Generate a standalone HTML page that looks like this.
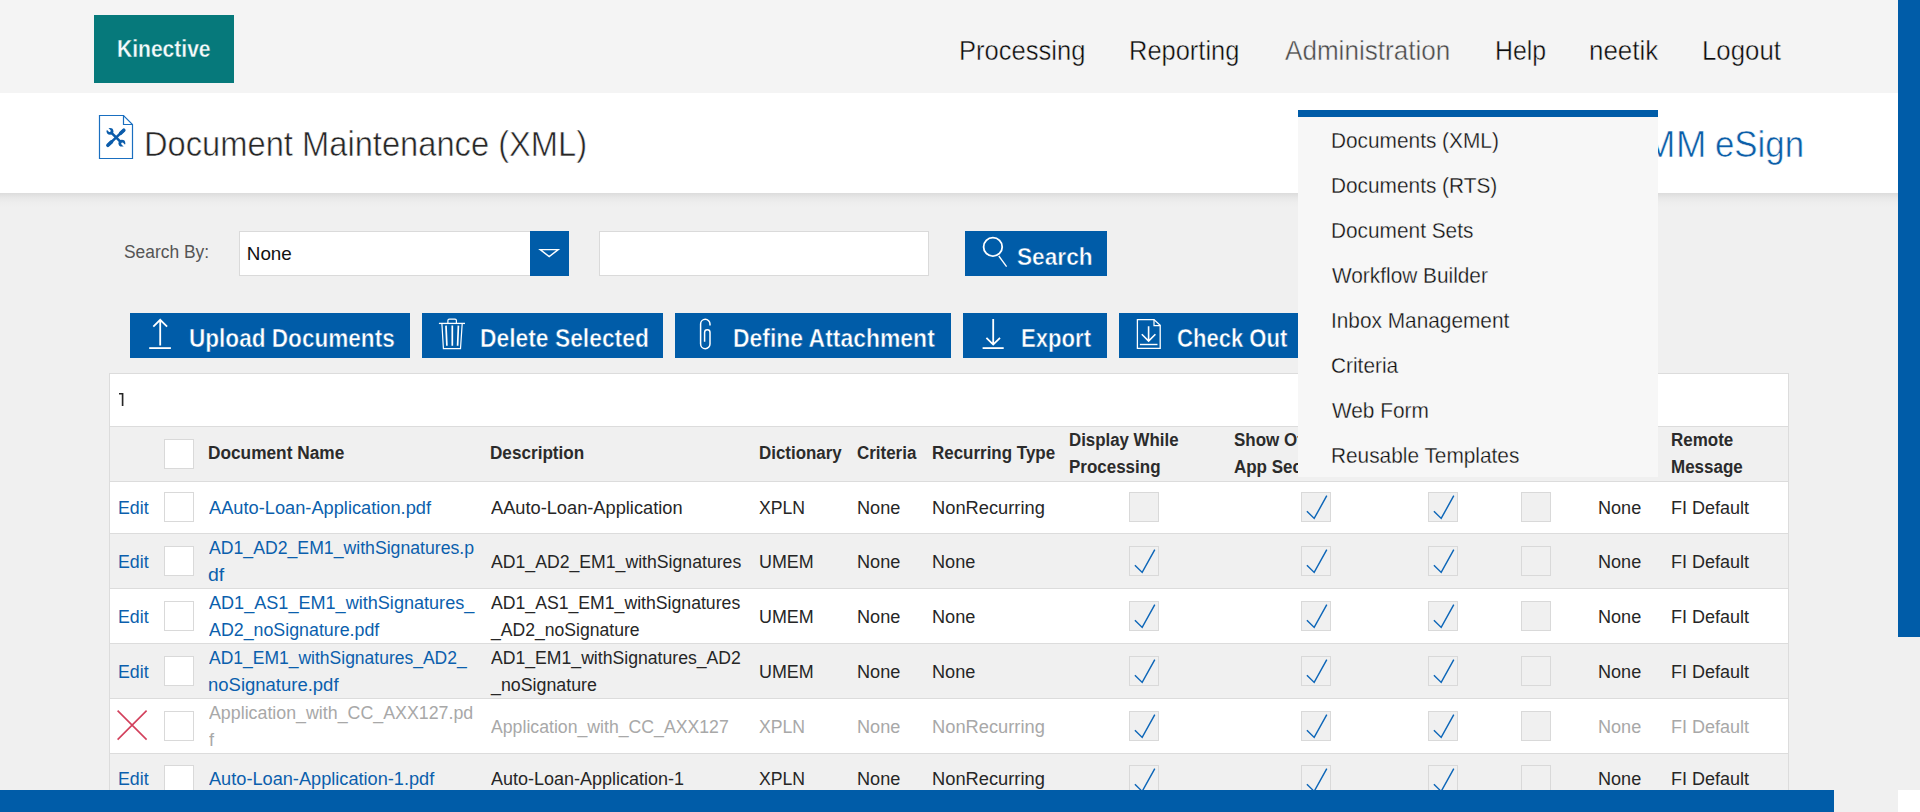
<!DOCTYPE html>
<html><head><meta charset="utf-8"><title>Document Maintenance (XML)</title>
<style>
html,body{margin:0;padding:0;}
body{width:1920px;height:812px;overflow:hidden;position:relative;background:#f0f0f0;font-family:"Liberation Sans",sans-serif;}
.a{position:absolute;box-sizing:border-box;}
.t{position:absolute;white-space:pre;transform-origin:0 0;}
</style></head><body>
<div class="a" style="left:0px;top:0px;width:1898px;height:93px;background:#f4f4f4"></div>
<div class="a" style="left:94px;top:15px;width:140px;height:68px;background:#06797b"></div>
<span class="t" style="left:117.25px;top:37px;font-size:24.06px;line-height:24.06px;color:#f4fbfb;font-weight:700;-webkit-text-stroke:0.35px #06797b;transform:scaleX(0.8750)">Kinective</span>
<span class="t" style="left:959.16px;top:37px;font-size:27.83px;line-height:27.83px;color:#0a0a0a;-webkit-text-stroke:0.45px #f4f4f4;transform:scaleX(0.9179)">Processing</span>
<span class="t" style="left:1129.17px;top:37px;font-size:27.83px;line-height:27.83px;color:#0a0a0a;-webkit-text-stroke:0.45px #f4f4f4;transform:scaleX(0.9145)">Reporting</span>
<span class="t" style="left:1285.00px;top:37px;font-size:27.83px;line-height:27.83px;color:#4a4a4a;-webkit-text-stroke:0.45px #f4f4f4;transform:scaleX(0.9371)">Administration</span>
<span class="t" style="left:1494.81px;top:37px;font-size:27.83px;line-height:27.83px;color:#0a0a0a;-webkit-text-stroke:0.45px #f4f4f4;transform:scaleX(0.8926)">Help</span>
<span class="t" style="left:1589.14px;top:37px;font-size:27.83px;line-height:27.83px;color:#0a0a0a;-webkit-text-stroke:0.45px #f4f4f4;transform:scaleX(0.9306)">neetik</span>
<span class="t" style="left:1702.14px;top:37px;font-size:27.83px;line-height:27.83px;color:#0a0a0a;-webkit-text-stroke:0.45px #f4f4f4;transform:scaleX(0.9277)">Logout</span>
<div class="a" style="left:0px;top:193px;width:1898px;height:15px;background:linear-gradient(#dcdcdc,#e7e7e7 30%,#eeeeee 65%,#f0f0f0)"></div>
<div class="a" style="left:0px;top:93px;width:1898px;height:100px;background:#fff"></div>
<svg class="a" style="left:95px;top:110px" width="45" height="54" viewBox="0 0 45 54">
<path d="M4.5,5.5 H28.5 L37.5,14.5 V48.5 H4.5 Z" fill="none" stroke="#1a6fc0" stroke-width="1.2"/>
<path d="M28.5,5.5 V14.5 H37.5" fill="none" stroke="#1a6fc0" stroke-width="1.2"/>
<path d="M15,21.3 L26.9,33.2" stroke="#0b5cab" stroke-width="2.6"/>
<circle cx="15" cy="21.3" r="3.4" fill="#0b5cab"/><circle cx="26.9" cy="33.2" r="3.4" fill="#0b5cab"/>
<path d="M12.6,18.9 L14.6,20.9" stroke="#fff" stroke-width="2.2" stroke-linecap="round"/>
<path d="M29.3,35.6 L27.3,33.6" stroke="#fff" stroke-width="2.2" stroke-linecap="round"/>
<path d="M13.3,34.9 L28.4,20.6" stroke="#0b5cab" stroke-width="2.6" stroke-linecap="round"/>
<path d="M12.9,35.3 L16.5,31.9 M25.6,23.3 L28.8,20.2" stroke="#0b5cab" stroke-width="3.6" stroke-linecap="round"/>
</svg>
<span class="t" style="left:144.43px;top:127px;font-size:34.2px;line-height:34.2px;color:#262626;-webkit-text-stroke:0.55px #fff;transform:scaleX(0.9558)">Document Maintenance (XML)</span>
<span class="t" style="left:1644.87px;top:126px;font-size:37.39px;line-height:37.39px;color:#0c5ea8;-webkit-text-stroke:0.55px #fff;transform:scaleX(0.9760)">M</span>
<span class="t" style="left:1675.97px;top:126px;font-size:37.39px;line-height:37.39px;color:#0c5ea8;-webkit-text-stroke:0.55px #fff;transform:scaleX(0.9760)">M</span>
<span class="t" style="left:1715.24px;top:126px;font-size:37.39px;line-height:37.39px;color:#0c5ea8;-webkit-text-stroke:0.55px #fff;transform:scaleX(0.9319)">eSign</span>
<span class="t" style="left:123.80px;top:242px;font-size:19.28px;line-height:19.28px;color:#555;transform:scaleX(0.9022)">Search By:</span>
<div class="a" style="left:239px;top:231px;width:330px;height:45px;background:#fff;border:1px solid #dadada"></div>
<span class="t" style="left:246.80px;top:245px;font-size:18.84px;line-height:18.84px;color:#111;transform:scaleX(1.0000)">None</span>
<div class="a" style="left:530px;top:231px;width:39px;height:45px;background:#005ca8"></div>
<svg class="a" style="left:530px;top:231px" width="39" height="45"><path d="M10.2,18.6 H28.2 L19.2,25.6 Z" fill="none" stroke="#fff" stroke-width="1.4" stroke-linejoin="miter"/></svg>
<div class="a" style="left:599px;top:231px;width:330px;height:45px;background:#fff;border:1px solid #dadada"></div>
<div class="a" style="left:965px;top:231px;width:142px;height:45px;background:#005ca8"></div>
<svg class="a" style="left:965px;top:231px" width="142" height="45"><circle cx="27.9" cy="15.9" r="9.3" fill="none" stroke="#fff" stroke-width="1.8"/><path d="M33.8,25 L41.6,35.7" stroke="#fff" stroke-width="1.3"/></svg>
<span class="t" style="left:1017.08px;top:244.8px;font-size:24.64px;line-height:24.64px;color:#fff;font-weight:700;-webkit-text-stroke:0.5px #005ca8;transform:scaleX(0.9200)">Search</span>
<div class="a" style="left:130px;top:313px;width:280px;height:45px;background:#005ca8"></div>
<div class="a" style="left:422px;top:313px;width:241px;height:45px;background:#005ca8"></div>
<div class="a" style="left:675px;top:313px;width:276px;height:45px;background:#005ca8"></div>
<div class="a" style="left:963px;top:313px;width:144px;height:45px;background:#005ca8"></div>
<div class="a" style="left:1119px;top:313px;width:179px;height:45px;background:#005ca8"></div>
<svg class="a" style="left:0;top:300px" width="1300" height="70" viewBox="0 300 1300 70" fill="none" stroke="#fff">
<path d="M160.2,320 V345.6 M153.3,326.6 L160.2,319.8 L167.1,326.6" stroke-width="1.8"/>
<path d="M149.2,348.1 H170.9" stroke-width="1.8"/>
<path d="M438.9,323.4 H465" stroke-width="1.3"/>
<path d="M447.9,323.4 V320.6 Q447.9,319.2 449.3,319.2 H455 Q456.4,319.2 456.4,320.6 V323.4" stroke-width="1.2"/>
<path d="M441.9,323.6 L443.4,348.6 H460.5 L462.2,323.6" stroke-width="1.2"/>
<path d="M446,325.6 L446.9,345.8 M452.3,325.6 V345.8 M458.4,325.6 L457.6,345.8" stroke-width="1.7"/>
<path d="M710,325.4 V324 A4.7,4.7 0 0 0 700.6,324 V344 A4.7,4.7 0 0 0 710,344 V332.4 A2.7,2.7 0 0 0 704.6,332.4 V341.7" stroke-width="1.5"/>
<path d="M993.2,319 V345 M986.4,337.8 L993.2,344.6 L1000,337.8" stroke-width="1.8"/>
<path d="M982.6,348.1 H1003.7" stroke-width="1.8"/>
<path d="M1137.4,319.6 H1154 L1160.2,325.4 V348.4 H1137.4 Z" stroke-width="1.3"/>
<path d="M1154,319.6 V325.6 H1160.2" stroke-width="1.2"/>
<path d="M1148.6,326.3 V341 M1141.8,334.2 L1148.6,341 L1155.4,334.2" stroke-width="1.6"/>
<path d="M1139.9,344.5 H1157.5" stroke-width="1.4"/>
</svg>
<span class="t" style="left:188.60px;top:326px;font-size:25.07px;line-height:25.07px;color:#fff;font-weight:700;-webkit-text-stroke:0.5px #005ca8;transform:scaleX(0.9009)">Upload Documents</span>
<span class="t" style="left:479.88px;top:326px;font-size:25.07px;line-height:25.07px;color:#fff;font-weight:700;-webkit-text-stroke:0.5px #005ca8;transform:scaleX(0.9115)">Delete Selected</span>
<span class="t" style="left:733.17px;top:326px;font-size:25.07px;line-height:25.07px;color:#fff;font-weight:700;-webkit-text-stroke:0.5px #005ca8;transform:scaleX(0.9151)">Define Attachment</span>
<span class="t" style="left:1021.03px;top:326px;font-size:25.07px;line-height:25.07px;color:#fff;font-weight:700;-webkit-text-stroke:0.5px #005ca8;transform:scaleX(0.8831)">Export</span>
<span class="t" style="left:1176.82px;top:326px;font-size:25.07px;line-height:25.07px;color:#fff;font-weight:700;-webkit-text-stroke:0.5px #005ca8;transform:scaleX(0.8798)">Check Out</span>
<div class="a" style="left:109px;top:373px;width:1680px;height:439px;background:#fff;border:1px solid #dcdcdc;border-bottom:none"></div>
<div class="a" style="left:110px;top:427px;width:1678px;height:54px;background:#f0f0f0"></div>
<div class="a" style="left:110px;top:482px;width:1678px;height:51px;background:#fff"></div>
<div class="a" style="left:110px;top:534px;width:1678px;height:54px;background:#f0f0f0"></div>
<div class="a" style="left:110px;top:589px;width:1678px;height:54px;background:#fff"></div>
<div class="a" style="left:110px;top:644px;width:1678px;height:54px;background:#f0f0f0"></div>
<div class="a" style="left:110px;top:699px;width:1678px;height:54px;background:#fff"></div>
<div class="a" style="left:110px;top:754px;width:1678px;height:58px;background:#f0f0f0"></div>
<div class="a" style="left:110px;top:426px;width:1678px;height:1px;background:#dcdcdc"></div>
<div class="a" style="left:110px;top:481px;width:1678px;height:1px;background:#dcdcdc"></div>
<div class="a" style="left:110px;top:533px;width:1678px;height:1px;background:#dcdcdc"></div>
<div class="a" style="left:110px;top:588px;width:1678px;height:1px;background:#dcdcdc"></div>
<div class="a" style="left:110px;top:643px;width:1678px;height:1px;background:#dcdcdc"></div>
<div class="a" style="left:110px;top:698px;width:1678px;height:1px;background:#dcdcdc"></div>
<div class="a" style="left:110px;top:753px;width:1678px;height:1px;background:#dcdcdc"></div>
<svg class="a" style="left:115px;top:390px" width="12" height="20"><path d="M4,3.7 H7.6 M7.6,3 V15.9" stroke="#262626" stroke-width="1.65" fill="none"/></svg>
<span class="t" style="left:208.45px;top:443.75px;font-size:18.26px;line-height:18.26px;color:#2b2b2b;font-weight:700;transform:scaleX(0.9461)">Document Name</span>
<span class="t" style="left:490.06px;top:443.75px;font-size:18.26px;line-height:18.26px;color:#2b2b2b;font-weight:700;transform:scaleX(0.9388)">Description</span>
<span class="t" style="left:759.37px;top:443.75px;font-size:18.26px;line-height:18.26px;color:#2b2b2b;font-weight:700;transform:scaleX(0.9261)">Dictionary</span>
<span class="t" style="left:856.77px;top:443.75px;font-size:18.26px;line-height:18.26px;color:#2b2b2b;font-weight:700;transform:scaleX(0.9286)">Criteria</span>
<span class="t" style="left:931.57px;top:443.75px;font-size:18.26px;line-height:18.26px;color:#2b2b2b;font-weight:700;transform:scaleX(0.9290)">Recurring Type</span>
<span class="t" style="left:1068.88px;top:430.8px;font-size:18.26px;line-height:18.26px;color:#2b2b2b;font-weight:700;transform:scaleX(0.9231)">Display While</span>
<span class="t" style="left:1068.87px;top:457.9px;font-size:18.26px;line-height:18.26px;color:#2b2b2b;font-weight:700;transform:scaleX(0.9300)">Processing</span>
<span class="t" style="left:1234.07px;top:430.8px;font-size:18.26px;line-height:18.26px;color:#2b2b2b;font-weight:700;transform:scaleX(0.9300)">Show Other</span>
<span class="t" style="left:1234.07px;top:457.9px;font-size:18.26px;line-height:18.26px;color:#2b2b2b;font-weight:700;transform:scaleX(0.9300)">App Section</span>
<span class="t" style="left:1670.97px;top:430.8px;font-size:18.26px;line-height:18.26px;color:#2b2b2b;font-weight:700;transform:scaleX(0.9300)">Remote</span>
<span class="t" style="left:1670.97px;top:457.9px;font-size:18.26px;line-height:18.26px;color:#2b2b2b;font-weight:700;transform:scaleX(0.9300)">Message</span>
<div class="a" style="left:164px;top:439px;width:30px;height:30px;background:#fff;border:1px solid #d9d9d9"></div>
<span class="t" style="left:117.55px;top:499.0px;font-size:18.7px;line-height:18.7px;color:#0b5fad;transform:scaleX(0.9516)">Edit</span>
<div class="a" style="left:164px;top:492px;width:30px;height:30px;background:#fff;border:1px solid #d9d9d9"></div>
<span class="t" style="left:209.40px;top:499.0px;font-size:18.7px;line-height:18.7px;color:#0b5fad;transform:scaleX(0.9759)">AAuto-Loan-Application.pdf</span>
<span class="t" style="left:491.00px;top:499.0px;font-size:18.7px;line-height:18.7px;color:#262626;transform:scaleX(0.9754)">AAuto-Loan-Application</span>
<span class="t" style="left:759.36px;top:499.0px;font-size:18.7px;line-height:18.7px;color:#262626;transform:scaleX(0.9446)">XPLN</span>
<span class="t" style="left:856.73px;top:499.0px;font-size:18.7px;line-height:18.7px;color:#262626;transform:scaleX(0.9698)">None</span>
<span class="t" style="left:931.62px;top:499.0px;font-size:18.7px;line-height:18.7px;color:#262626;transform:scaleX(0.9788)">NonRecurring</span>
<div class="a" style="left:1129px;top:492px;width:30px;height:30px;background:#f0f0f0;border:1px solid #d9d9d9"></div>
<div class="a" style="left:1301px;top:492px;width:30px;height:30px;background:#f0f0f0;border:1px solid #d9d9d9"></div>
<svg class="a" style="left:1301px;top:492px" width="30" height="30"><path d="M5.9,19.2 L13.2,26.4 L25.8,3.7" fill="none" stroke="#0d66b8" stroke-width="1.45"/></svg>
<div class="a" style="left:1428px;top:492px;width:30px;height:30px;background:#f0f0f0;border:1px solid #d9d9d9"></div>
<svg class="a" style="left:1428px;top:492px" width="30" height="30"><path d="M5.9,19.2 L13.2,26.4 L25.8,3.7" fill="none" stroke="#0d66b8" stroke-width="1.45"/></svg>
<div class="a" style="left:1521px;top:492px;width:30px;height:30px;background:#f0f0f0;border:1px solid #d9d9d9"></div>
<span class="t" style="left:1598.03px;top:499.0px;font-size:18.7px;line-height:18.7px;color:#262626;transform:scaleX(0.9674)">None</span>
<span class="t" style="left:1670.94px;top:499.0px;font-size:18.7px;line-height:18.7px;color:#262626;transform:scaleX(0.9637)">FI Default</span>
<span class="t" style="left:117.55px;top:552.5px;font-size:18.7px;line-height:18.7px;color:#0b5fad;transform:scaleX(0.9516)">Edit</span>
<div class="a" style="left:164px;top:546px;width:30px;height:30px;background:#fff;border:1px solid #d9d9d9"></div>
<span class="t" style="left:209.40px;top:539px;font-size:18.7px;line-height:18.7px;color:#0b5fad;transform:scaleX(0.9450)">AD1_AD2_EM1_withSignatures.p</span>
<span class="t" style="left:208.36px;top:566px;font-size:18.7px;line-height:18.7px;color:#0b5fad;transform:scaleX(1.0400)">df</span>
<span class="t" style="left:491.00px;top:552.5px;font-size:18.7px;line-height:18.7px;color:#262626;transform:scaleX(0.9447)">AD1_AD2_EM1_withSignatures</span>
<span class="t" style="left:759.34px;top:552.5px;font-size:18.7px;line-height:18.7px;color:#262626;transform:scaleX(0.9582)">UMEM</span>
<span class="t" style="left:856.73px;top:552.5px;font-size:18.7px;line-height:18.7px;color:#262626;transform:scaleX(0.9698)">None</span>
<span class="t" style="left:931.63px;top:552.5px;font-size:18.7px;line-height:18.7px;color:#262626;transform:scaleX(0.9721)">None</span>
<div class="a" style="left:1129px;top:546px;width:30px;height:30px;background:#f0f0f0;border:1px solid #d9d9d9"></div>
<svg class="a" style="left:1129px;top:546px" width="30" height="30"><path d="M5.9,19.2 L13.2,26.4 L25.8,3.7" fill="none" stroke="#0d66b8" stroke-width="1.45"/></svg>
<div class="a" style="left:1301px;top:546px;width:30px;height:30px;background:#f0f0f0;border:1px solid #d9d9d9"></div>
<svg class="a" style="left:1301px;top:546px" width="30" height="30"><path d="M5.9,19.2 L13.2,26.4 L25.8,3.7" fill="none" stroke="#0d66b8" stroke-width="1.45"/></svg>
<div class="a" style="left:1428px;top:546px;width:30px;height:30px;background:#f0f0f0;border:1px solid #d9d9d9"></div>
<svg class="a" style="left:1428px;top:546px" width="30" height="30"><path d="M5.9,19.2 L13.2,26.4 L25.8,3.7" fill="none" stroke="#0d66b8" stroke-width="1.45"/></svg>
<div class="a" style="left:1521px;top:546px;width:30px;height:30px;background:#f0f0f0;border:1px solid #d9d9d9"></div>
<span class="t" style="left:1598.03px;top:552.5px;font-size:18.7px;line-height:18.7px;color:#262626;transform:scaleX(0.9674)">None</span>
<span class="t" style="left:1670.94px;top:552.5px;font-size:18.7px;line-height:18.7px;color:#262626;transform:scaleX(0.9637)">FI Default</span>
<span class="t" style="left:117.55px;top:607.5px;font-size:18.7px;line-height:18.7px;color:#0b5fad;transform:scaleX(0.9516)">Edit</span>
<div class="a" style="left:164px;top:601px;width:30px;height:30px;background:#fff;border:1px solid #d9d9d9"></div>
<span class="t" style="left:209.40px;top:594px;font-size:18.7px;line-height:18.7px;color:#0b5fad;transform:scaleX(0.9673)">AD1_AS1_EM1_withSignatures_</span>
<span class="t" style="left:209.40px;top:621px;font-size:18.7px;line-height:18.7px;color:#0b5fad;transform:scaleX(0.9531)">AD2_noSignature.pdf</span>
<span class="t" style="left:491.00px;top:594px;font-size:18.7px;line-height:18.7px;color:#262626;transform:scaleX(0.9445)">AD1_AS1_EM1_withSignatures</span>
<span class="t" style="left:491.00px;top:621px;font-size:18.7px;line-height:18.7px;color:#262626;transform:scaleX(0.9408)">_AD2_noSignature</span>
<span class="t" style="left:759.34px;top:607.5px;font-size:18.7px;line-height:18.7px;color:#262626;transform:scaleX(0.9582)">UMEM</span>
<span class="t" style="left:856.73px;top:607.5px;font-size:18.7px;line-height:18.7px;color:#262626;transform:scaleX(0.9698)">None</span>
<span class="t" style="left:931.63px;top:607.5px;font-size:18.7px;line-height:18.7px;color:#262626;transform:scaleX(0.9721)">None</span>
<div class="a" style="left:1129px;top:601px;width:30px;height:30px;background:#f0f0f0;border:1px solid #d9d9d9"></div>
<svg class="a" style="left:1129px;top:601px" width="30" height="30"><path d="M5.9,19.2 L13.2,26.4 L25.8,3.7" fill="none" stroke="#0d66b8" stroke-width="1.45"/></svg>
<div class="a" style="left:1301px;top:601px;width:30px;height:30px;background:#f0f0f0;border:1px solid #d9d9d9"></div>
<svg class="a" style="left:1301px;top:601px" width="30" height="30"><path d="M5.9,19.2 L13.2,26.4 L25.8,3.7" fill="none" stroke="#0d66b8" stroke-width="1.45"/></svg>
<div class="a" style="left:1428px;top:601px;width:30px;height:30px;background:#f0f0f0;border:1px solid #d9d9d9"></div>
<svg class="a" style="left:1428px;top:601px" width="30" height="30"><path d="M5.9,19.2 L13.2,26.4 L25.8,3.7" fill="none" stroke="#0d66b8" stroke-width="1.45"/></svg>
<div class="a" style="left:1521px;top:601px;width:30px;height:30px;background:#f0f0f0;border:1px solid #d9d9d9"></div>
<span class="t" style="left:1598.03px;top:607.5px;font-size:18.7px;line-height:18.7px;color:#262626;transform:scaleX(0.9674)">None</span>
<span class="t" style="left:1670.94px;top:607.5px;font-size:18.7px;line-height:18.7px;color:#262626;transform:scaleX(0.9637)">FI Default</span>
<span class="t" style="left:117.55px;top:662.5px;font-size:18.7px;line-height:18.7px;color:#0b5fad;transform:scaleX(0.9516)">Edit</span>
<div class="a" style="left:164px;top:656px;width:30px;height:30px;background:#fff;border:1px solid #d9d9d9"></div>
<span class="t" style="left:209.40px;top:649px;font-size:18.7px;line-height:18.7px;color:#0b5fad;transform:scaleX(0.9362)">AD1_EM1_withSignatures_AD2_</span>
<span class="t" style="left:208.41px;top:676px;font-size:18.7px;line-height:18.7px;color:#0b5fad;transform:scaleX(0.9893)">noSignature.pdf</span>
<span class="t" style="left:491.00px;top:649px;font-size:18.7px;line-height:18.7px;color:#262626;transform:scaleX(0.9432)">AD1_EM1_withSignatures_AD2</span>
<span class="t" style="left:491.00px;top:676px;font-size:18.7px;line-height:18.7px;color:#262626;transform:scaleX(0.9523)">_noSignature</span>
<span class="t" style="left:759.34px;top:662.5px;font-size:18.7px;line-height:18.7px;color:#262626;transform:scaleX(0.9582)">UMEM</span>
<span class="t" style="left:856.73px;top:662.5px;font-size:18.7px;line-height:18.7px;color:#262626;transform:scaleX(0.9698)">None</span>
<span class="t" style="left:931.63px;top:662.5px;font-size:18.7px;line-height:18.7px;color:#262626;transform:scaleX(0.9721)">None</span>
<div class="a" style="left:1129px;top:656px;width:30px;height:30px;background:#f0f0f0;border:1px solid #d9d9d9"></div>
<svg class="a" style="left:1129px;top:656px" width="30" height="30"><path d="M5.9,19.2 L13.2,26.4 L25.8,3.7" fill="none" stroke="#0d66b8" stroke-width="1.45"/></svg>
<div class="a" style="left:1301px;top:656px;width:30px;height:30px;background:#f0f0f0;border:1px solid #d9d9d9"></div>
<svg class="a" style="left:1301px;top:656px" width="30" height="30"><path d="M5.9,19.2 L13.2,26.4 L25.8,3.7" fill="none" stroke="#0d66b8" stroke-width="1.45"/></svg>
<div class="a" style="left:1428px;top:656px;width:30px;height:30px;background:#f0f0f0;border:1px solid #d9d9d9"></div>
<svg class="a" style="left:1428px;top:656px" width="30" height="30"><path d="M5.9,19.2 L13.2,26.4 L25.8,3.7" fill="none" stroke="#0d66b8" stroke-width="1.45"/></svg>
<div class="a" style="left:1521px;top:656px;width:30px;height:30px;background:#f0f0f0;border:1px solid #d9d9d9"></div>
<span class="t" style="left:1598.03px;top:662.5px;font-size:18.7px;line-height:18.7px;color:#262626;transform:scaleX(0.9674)">None</span>
<span class="t" style="left:1670.94px;top:662.5px;font-size:18.7px;line-height:18.7px;color:#262626;transform:scaleX(0.9637)">FI Default</span>
<svg class="a" style="left:116px;top:709px" width="33" height="33"><path d="M1.6,1.6 L30.6,30.6 M30.6,1.6 L1.6,30.6" stroke="#d2405c" stroke-width="1.6"/></svg>
<div class="a" style="left:164px;top:711px;width:30px;height:30px;background:#fff;border:1px solid #d9d9d9"></div>
<span class="t" style="left:209.40px;top:704px;font-size:18.7px;line-height:18.7px;color:#a8a8a8;transform:scaleX(0.9525)">Application_with_CC_AXX127.pd</span>
<span class="t" style="left:209.40px;top:731px;font-size:18.7px;line-height:18.7px;color:#a8a8a8;transform:scaleX(0.9700)">f</span>
<span class="t" style="left:491.00px;top:717.5px;font-size:18.7px;line-height:18.7px;color:#a8a8a8;transform:scaleX(0.9458)">Application_with_CC_AXX127</span>
<span class="t" style="left:759.36px;top:717.5px;font-size:18.7px;line-height:18.7px;color:#a8a8a8;transform:scaleX(0.9446)">XPLN</span>
<span class="t" style="left:856.73px;top:717.5px;font-size:18.7px;line-height:18.7px;color:#a8a8a8;transform:scaleX(0.9698)">None</span>
<span class="t" style="left:931.62px;top:717.5px;font-size:18.7px;line-height:18.7px;color:#a8a8a8;transform:scaleX(0.9788)">NonRecurring</span>
<div class="a" style="left:1129px;top:711px;width:30px;height:30px;background:#f0f0f0;border:1px solid #d9d9d9"></div>
<svg class="a" style="left:1129px;top:711px" width="30" height="30"><path d="M5.9,19.2 L13.2,26.4 L25.8,3.7" fill="none" stroke="#0d66b8" stroke-width="1.45"/></svg>
<div class="a" style="left:1301px;top:711px;width:30px;height:30px;background:#f0f0f0;border:1px solid #d9d9d9"></div>
<svg class="a" style="left:1301px;top:711px" width="30" height="30"><path d="M5.9,19.2 L13.2,26.4 L25.8,3.7" fill="none" stroke="#0d66b8" stroke-width="1.45"/></svg>
<div class="a" style="left:1428px;top:711px;width:30px;height:30px;background:#f0f0f0;border:1px solid #d9d9d9"></div>
<svg class="a" style="left:1428px;top:711px" width="30" height="30"><path d="M5.9,19.2 L13.2,26.4 L25.8,3.7" fill="none" stroke="#0d66b8" stroke-width="1.45"/></svg>
<div class="a" style="left:1521px;top:711px;width:30px;height:30px;background:#f0f0f0;border:1px solid #d9d9d9"></div>
<span class="t" style="left:1598.03px;top:717.5px;font-size:18.7px;line-height:18.7px;color:#a8a8a8;transform:scaleX(0.9674)">None</span>
<span class="t" style="left:1670.94px;top:717.5px;font-size:18.7px;line-height:18.7px;color:#a8a8a8;transform:scaleX(0.9637)">FI Default</span>
<span class="t" style="left:117.55px;top:770.4px;font-size:18.7px;line-height:18.7px;color:#0b5fad;transform:scaleX(0.9516)">Edit</span>
<div class="a" style="left:164px;top:765px;width:30px;height:30px;background:#fff;border:1px solid #d9d9d9"></div>
<span class="t" style="left:209.40px;top:770.4px;font-size:18.7px;line-height:18.7px;color:#0b5fad;transform:scaleX(0.9724)">Auto-Loan-Application-1.pdf</span>
<span class="t" style="left:491.00px;top:770.4px;font-size:18.7px;line-height:18.7px;color:#262626;transform:scaleX(0.9620)">Auto-Loan-Application-1</span>
<span class="t" style="left:759.36px;top:770.4px;font-size:18.7px;line-height:18.7px;color:#262626;transform:scaleX(0.9446)">XPLN</span>
<span class="t" style="left:856.73px;top:770.4px;font-size:18.7px;line-height:18.7px;color:#262626;transform:scaleX(0.9698)">None</span>
<span class="t" style="left:931.62px;top:770.4px;font-size:18.7px;line-height:18.7px;color:#262626;transform:scaleX(0.9788)">NonRecurring</span>
<div class="a" style="left:1129px;top:765px;width:30px;height:30px;background:#f0f0f0;border:1px solid #d9d9d9"></div>
<svg class="a" style="left:1129px;top:765px" width="30" height="30"><path d="M5.9,19.2 L13.2,26.4 L25.8,3.7" fill="none" stroke="#0d66b8" stroke-width="1.45"/></svg>
<div class="a" style="left:1301px;top:765px;width:30px;height:30px;background:#f0f0f0;border:1px solid #d9d9d9"></div>
<svg class="a" style="left:1301px;top:765px" width="30" height="30"><path d="M5.9,19.2 L13.2,26.4 L25.8,3.7" fill="none" stroke="#0d66b8" stroke-width="1.45"/></svg>
<div class="a" style="left:1428px;top:765px;width:30px;height:30px;background:#f0f0f0;border:1px solid #d9d9d9"></div>
<svg class="a" style="left:1428px;top:765px" width="30" height="30"><path d="M5.9,19.2 L13.2,26.4 L25.8,3.7" fill="none" stroke="#0d66b8" stroke-width="1.45"/></svg>
<div class="a" style="left:1521px;top:765px;width:30px;height:30px;background:#f0f0f0;border:1px solid #d9d9d9"></div>
<span class="t" style="left:1598.03px;top:770.4px;font-size:18.7px;line-height:18.7px;color:#262626;transform:scaleX(0.9674)">None</span>
<span class="t" style="left:1670.94px;top:770.4px;font-size:18.7px;line-height:18.7px;color:#262626;transform:scaleX(0.9637)">FI Default</span>
<div class="a" style="left:1298px;top:110px;width:360px;height:367px;background:#f7f7f7"></div>
<div class="a" style="left:1298px;top:110px;width:360px;height:7px;background:#005ca8"></div>
<span class="t" style="left:1330.52px;top:130px;font-size:22.17px;line-height:22.17px;color:#111;-webkit-text-stroke:0.3px #f7f7f7;transform:scaleX(0.9400)">Documents (XML)</span>
<span class="t" style="left:1330.52px;top:175px;font-size:22.17px;line-height:22.17px;color:#111;-webkit-text-stroke:0.3px #f7f7f7;transform:scaleX(0.9400)">Documents (RTS)</span>
<span class="t" style="left:1330.52px;top:220px;font-size:22.17px;line-height:22.17px;color:#111;-webkit-text-stroke:0.3px #f7f7f7;transform:scaleX(0.9400)">Document Sets</span>
<span class="t" style="left:1332.40px;top:265px;font-size:22.17px;line-height:22.17px;color:#111;-webkit-text-stroke:0.3px #f7f7f7;transform:scaleX(0.9400)">Workflow Builder</span>
<span class="t" style="left:1330.52px;top:310px;font-size:22.17px;line-height:22.17px;color:#111;-webkit-text-stroke:0.3px #f7f7f7;transform:scaleX(0.9400)">Inbox Management</span>
<span class="t" style="left:1331.46px;top:355px;font-size:22.17px;line-height:22.17px;color:#111;-webkit-text-stroke:0.3px #f7f7f7;transform:scaleX(0.9400)">Criteria</span>
<span class="t" style="left:1332.40px;top:400px;font-size:22.17px;line-height:22.17px;color:#111;-webkit-text-stroke:0.3px #f7f7f7;transform:scaleX(0.9400)">Web Form</span>
<span class="t" style="left:1330.52px;top:445px;font-size:22.17px;line-height:22.17px;color:#111;-webkit-text-stroke:0.3px #f7f7f7;transform:scaleX(0.9400)">Reusable Templates</span>
<div class="a" style="left:1898px;top:0px;width:22px;height:790px;background:#f0f0f0"></div>
<div class="a" style="left:1898px;top:0px;width:22px;height:637px;background:#005ca8"></div>
<div class="a" style="left:0px;top:790px;width:1898px;height:22px;background:#f0f0f0"></div>
<div class="a" style="left:0px;top:790px;width:1834px;height:22px;background:#005ca8"></div>
<div class="a" style="left:1898px;top:790px;width:22px;height:22px;background:#fff"></div>
</body></html>
